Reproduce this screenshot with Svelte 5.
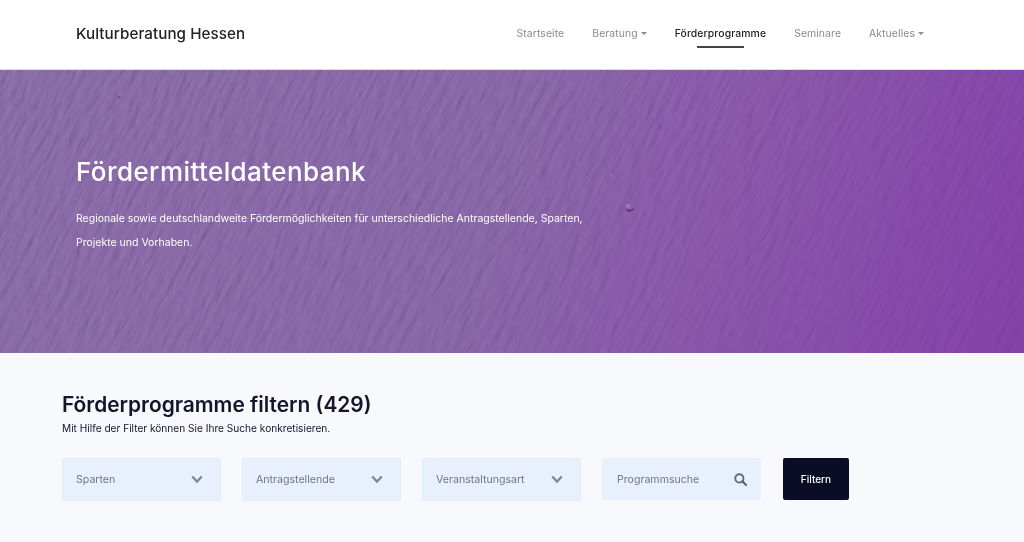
<script>
  const navItems = [
    { label: 'Startseite' },
    { label: 'Beratung', caret: true },
    { label: 'Förderprogramme', active: true },
    { label: 'Seminare' },
    { label: 'Aktuelles', caret: true }
  ];
  const selects = ['Sparten', 'Antragstellende', 'Veranstaltungsart'];
</script>

<header class="topbar">
  <a class="brand" href="#top">Kulturberatung Hessen</a>
  <nav class="nav">
    {#each navItems as item}
      <a class="nav-link" class:active={item.active} href="#top">
        {item.label}{#if item.caret}<span class="caret"></span>{/if}
      </a>
    {/each}
  </nav>
</header>

<section class="hero">
  <svg class="texture" width="1024" height="283" aria-hidden="true">
    <defs>
      <filter id="wall" x="0" y="0" width="100%" height="100%" color-interpolation-filters="sRGB">
        <feTurbulence type="fractalNoise" baseFrequency="0.035 0.16" numOctaves="5" seed="23" result="n" />
        <feDiffuseLighting in="n" surfaceScale="1.5" diffuseConstant="0.8" lighting-color="#fff">
          <feDistantLight azimuth="225" elevation="45" />
        </feDiffuseLighting>
      </filter>
      <linearGradient id="fade" x1="0" x2="1" y1="0" y2="0.35">
        <stop offset="0" stop-color="#fff" stop-opacity="1" />
        <stop offset="0.6" stop-color="#fff" stop-opacity="0.75" />
        <stop offset="1" stop-color="#fff" stop-opacity="0.35" />
      </linearGradient>
      <mask id="fadeMask"><rect width="1024" height="283" fill="url(#fade)" /></mask>
    </defs>
    <g mask="url(#fadeMask)">
      <rect x="-500" y="-700" width="1900" height="1700" filter="url(#wall)" transform="rotate(-62 512 141)" />
    </g>
  </svg>
  <svg class="marks" width="1024" height="283" aria-hidden="true">
    <path d="M627 140q3 1.800 6-.6" fill="none" stroke="#5c2a86" stroke-width="1.600" stroke-linecap="round" />
    <circle cx="628" cy="136" r="2" fill="#a68fc0" opacity="0.7" />
    <circle cx="611" cy="105" r="1.600" fill="#a68fc0" opacity="0.35" />
    <circle cx="660" cy="57" r="1.500" fill="#5f3a85" opacity="0.4" />
    <circle cx="564" cy="147" r="1.500" fill="#4d2d70" opacity="0.5" />
    <circle cx="119" cy="27" r="1.300" fill="#4d3a68" opacity="0.5" />
  </svg>
  <div class="hero-copy">
    <h1>Fördermitteldatenbank</h1>
    <p>Regionale sowie deutschlandweite Fördermöglichkeiten für unterschiedliche Antragstellende, Sparten, Projekte und Vorhaben.</p>
  </div>
</section>

<main class="filters">
  <h2>Förderprogramme filtern (429)</h2>
  <p class="hint">Mit Hilfe der Filter können Sie Ihre Suche konkretisieren.</p>
  <div class="row">
    {#each selects as s}
      <div class="field select">
        <span>{s}</span>
        <svg width="12" height="9" viewBox="0 0 12 9" aria-hidden="true"><path d="M1.200 1.600 6 6.600l4.800-5" fill="none" stroke="#7d8494" stroke-width="2.200" /></svg>
      </div>
    {/each}
    <div class="field search">
      <span>Programmsuche</span>
      <svg width="13" height="13" viewBox="0 0 14 14" aria-hidden="true"><circle cx="5.800" cy="5.800" r="4.400" fill="none" stroke="#5f6675" stroke-width="2" /><path d="m9 9 4 4" stroke="#5f6675" stroke-width="2.400" stroke-linecap="round" /></svg>
    </div>
    <button class="go">Filtern</button>
  </div>
</main>

<style>
  :global(html), :global(body) { margin: 0; height: 542px; overflow: hidden; background: #f8f9fc; }
  :global(body) { font-family: Inter, "Noto Sans", sans-serif; }
  a { text-decoration: none; }

  .topbar {
    box-sizing: border-box;
    background: #fff;
    display: flex;
    align-items: center;
    justify-content: space-between;
    padding: 0 100px 2px 76px;
    border-bottom: 1px solid #e4dcea;
    height: 70px;
  }
  .brand { font-size: 15.2px; font-weight: 500; color: #222; letter-spacing: 0.07px; }
  .nav { display: flex; gap: 28px; }
  .nav-link {
    position: relative;
    font-size: 10.4px;
    color: #8a8a8a;
    letter-spacing: 0.1px;
    display: flex;
    align-items: center;
    gap: 3px;
  }
  .nav-link.active { color: #222; font-weight: 500; }
  .nav-link.active::after {
    content: "";
    position: absolute;
    left: 22px;
    right: 22px;
    bottom: -8px;
    height: 2px;
    background: #444;
  }
  .caret {
    width: 0; height: 0;
    border-left: 3px solid transparent;
    border-right: 3px solid transparent;
    border-top: 3px solid #8a8a8a;
  }

  .hero {
    position: relative;
    height: 283px;
    overflow: hidden;
    background: linear-gradient(108deg, #8669a5 0%, #8764a6 48%, #864fa8 78%, #8240a7 100%);
  }
  .texture { position: absolute; inset: 0; mix-blend-mode: soft-light; opacity: 0.5; }
  .marks { position: absolute; inset: 0; }
  .hero-copy { position: relative; padding: 86px 0 0 76px; width: 520px; }
  h1 { margin: 0; font-size: 26px; line-height: 32px; font-weight: 500; color: #fff; letter-spacing: 0.42px; }
  .hero-copy p { margin: 19px 0 0; font-size: 10.5px; line-height: 24px; color: #fff; }

  .filters { padding: 38px 0 0 62px; }
  h2 { margin: 0; font-size: 20.9px; line-height: 28px; font-weight: 600; color: #14152b; }
  .hint { margin: 2px 0 0; font-size: 10.15px; line-height: 14px; color: #14152b; }
  .row { display: flex; gap: 21px; margin-top: 23px; align-items: flex-start; }
  .field {
    width: 159px;
    height: 43px;
    box-sizing: border-box;
    background: #e9f0fd;
    border-radius: 2px;
    display: flex;
    align-items: center;
    justify-content: space-between;
    padding: 0 18px 0 14px;
    font-size: 10.6px;
    color: #6f7482;
    box-shadow: inset 0 0 0 1px #e3ebfa;
  }
  .search { height: 42px; padding: 0 14px 0 15px; box-shadow: none; }
  .go {
    width: 66px;
    height: 42px;
    margin-left: 1px;
    border: 0;
    border-radius: 2px;
    background: #0b0d26;
    color: #fff;
    font: 500 10px Inter, "Noto Sans", sans-serif;
  }
</style>
